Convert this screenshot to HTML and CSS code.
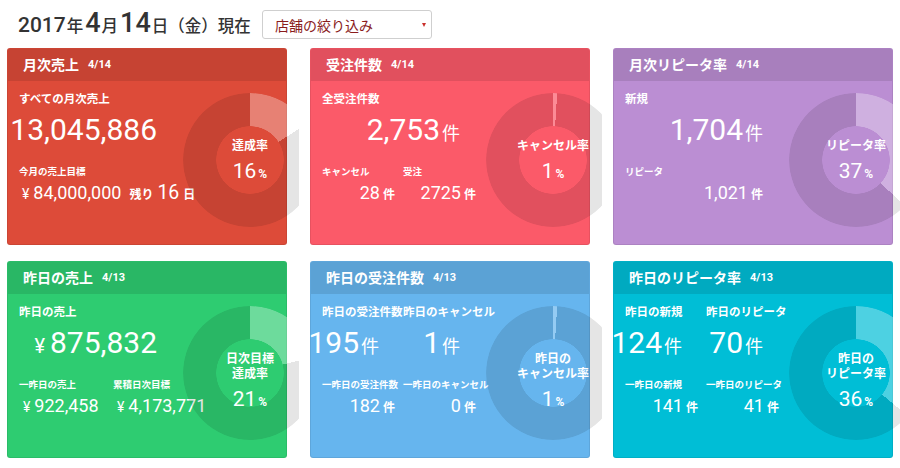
FILE: index.html
```html
<!DOCTYPE html>
<html lang="ja">
<head>
<meta charset="utf-8">
<title>ダッシュボード</title>
<link rel="stylesheet" href="styles.css">
</head>
<body>
<header class="topbar">
  <h1 class="today"><span class="y">2017</span><span class="u">年</span><span class="md">4</span><span class="u">月</span><span class="md">14</span><span class="u">日</span><span class="w">（金）現在</span></h1>
  <div class="select"><span>店舗の絞り込み</span><i class="caret"></i></div>
</header>
<main class="grid">
  <section class="col">
    <div class="card c-red">
      <div class="card-head"><span class="ttl">月次売上</span><span class="dt">4/14</span></div>
      <div class="donut" style="--p:16%"><div class="dl"><div class="t">達成率</div><div class="pc"><span>16</span>%</div></div></div>
      <div class="card-body">
        <div class="lbl">すべての月次売上</div>
        <div class="big"><span class="num">13,045,886</span></div>
        <div class="lbl sm">今月の売上目標</div>
        <div class="mid left"><span class="yen">¥</span><span class="num">84,000,000</span><span class="unit ml8">残り</span><span class="num lg ml4">16</span><span class="unit ml4">日</span></div>
      </div>
    </div>
  </section>
  <section class="col">
    <div class="card c-pink">
      <div class="card-head"><span class="ttl">受注件数</span><span class="dt">4/14</span></div>
      <div class="donut" style="--p:1%"><div class="dl"><div class="t">キャンセル率</div><div class="pc"><span>1</span>%</div></div></div>
      <div class="card-body">
        <div class="lbl">全受注件数</div>
        <div class="big"><span class="num">2,753</span><span class="unit">件</span></div>
        <div class="pair">
          <div class="cell"><div class="lbl sm">キャンセル</div><div class="mid"><span class="num">28</span><span class="unit">件</span></div></div>
          <div class="cell"><div class="lbl sm">受注</div><div class="mid"><span class="num">2725</span><span class="unit">件</span></div></div>
        </div>
      </div>
    </div>
  </section>
  <section class="col">
    <div class="card c-purple">
      <div class="card-head"><span class="ttl">月次リピータ率</span><span class="dt">4/14</span></div>
      <div class="donut" style="--p:37%"><div class="dl"><div class="t">リピータ率</div><div class="pc"><span>37</span>%</div></div></div>
      <div class="card-body">
        <div class="lbl">新規</div>
        <div class="big"><span class="num">1,704</span><span class="unit">件</span></div>
        <div class="lbl sm">リピータ</div>
        <div class="mid"><span class="num">1,021</span><span class="unit">件</span></div>
      </div>
    </div>
  </section>
  <section class="col">
    <div class="card c-green">
      <div class="card-head"><span class="ttl">昨日の売上</span><span class="dt">4/13</span></div>
      <div class="donut" style="--p:21%"><div class="dl"><div class="t">日次目標</div><div class="t">達成率</div><div class="pc"><span>21</span>%</div></div></div>
      <div class="card-body">
        <div class="lbl">昨日の売上</div>
        <div class="big"><span class="yen">¥</span><span class="num">875,832</span></div>
        <div class="pair">
          <div class="cell wide"><div class="lbl sm">一昨日の売上</div><div class="mid left"><span class="yen">¥</span><span class="num">922,458</span></div></div>
          <div class="cell"><div class="lbl sm">累積日次目標</div><div class="mid left"><span class="yen">¥</span><span class="num">4,173,771</span></div></div>
        </div>
      </div>
    </div>
  </section>
  <section class="col">
    <div class="card c-blue">
      <div class="card-head"><span class="ttl">昨日の受注件数</span><span class="dt">4/13</span></div>
      <div class="donut" style="--p:1%"><div class="dl"><div class="t">昨日の</div><div class="t">キャンセル率</div><div class="pc"><span>1</span>%</div></div></div>
      <div class="card-body">
        <div class="pair">
          <div class="cell"><div class="lbl">昨日の受注件数</div><div class="big"><span class="num">195</span><span class="unit">件</span></div></div>
          <div class="cell"><div class="lbl">昨日のキャンセル</div><div class="big"><span class="num">1</span><span class="unit">件</span></div></div>
        </div>
        <div class="pair">
          <div class="cell"><div class="lbl sm">一昨日の受注件数</div><div class="mid"><span class="num">182</span><span class="unit">件</span></div></div>
          <div class="cell"><div class="lbl sm">一昨日のキャンセル</div><div class="mid"><span class="num">0</span><span class="unit">件</span></div></div>
        </div>
      </div>
    </div>
  </section>
  <section class="col">
    <div class="card c-cyan">
      <div class="card-head"><span class="ttl">昨日のリピータ率</span><span class="dt">4/13</span></div>
      <div class="donut" style="--p:36%"><div class="dl"><div class="t">昨日の</div><div class="t">リピータ率</div><div class="pc"><span>36</span>%</div></div></div>
      <div class="card-body">
        <div class="pair">
          <div class="cell"><div class="lbl">昨日の新規</div><div class="big"><span class="num">124</span><span class="unit">件</span></div></div>
          <div class="cell"><div class="lbl">昨日のリピータ</div><div class="big"><span class="num">70</span><span class="unit">件</span></div></div>
        </div>
        <div class="pair">
          <div class="cell"><div class="lbl sm">一昨日の新規</div><div class="mid"><span class="num">141</span><span class="unit">件</span></div></div>
          <div class="cell"><div class="lbl sm">一昨日のリピータ</div><div class="mid"><span class="num">41</span><span class="unit">件</span></div></div>
        </div>
      </div>
    </div>
  </section>
</main>
</body>
</html>
```

FILE: styles.css
```css
* { box-sizing: border-box; }
html, body { margin: 0; padding: 0; overflow: hidden; background: #fff; }
body {
  width: 900px;
  height: 468px;
  font-family: Roboto, "Noto Sans CJK JP", sans-serif;
  color: #fff;
}

/* top bar */
.topbar {
  display: flex;
  align-items: center;
  height: 39px;
  padding: 10px 0 0 18px;
}
.today {
  margin: 0;
  width: 244px;
  display: flex;
  align-items: baseline;
  color: #333;
  font-weight: 500;
  font-size: 17px;
  line-height: 29px;
  white-space: nowrap;
}
.today .y { font-size: 21px; margin-right: 1px; }
.today .md { font-size: 27px; margin: 0 1px 0 2px; }
.today .u { font-size: 16.5px; }
.today .w { font-size: 16.5px; }
.select {
  position: relative;
  width: 170px;
  height: 29px;
  display: flex;
  align-items: center;
  padding-left: 12px;
  border: 1px solid #cfcfcf;
  border-radius: 3px;
  background: #fff;
  color: #8a1c1c;
  font-size: 14px;
}
.caret {
  position: absolute;
  right: 5px;
  top: 12px;
  width: 0;
  height: 0;
  border-left: 2.5px solid transparent;
  border-right: 2.5px solid transparent;
  border-top: 4px solid #c9302c;
}

/* grid */
.grid {
  display: grid;
  grid-template-columns: 303px 303px 298px;
  row-gap: 16px;
  width: 904px;
  margin: 9px 0 0 -4px;
}
.col {
  overflow: hidden;
  padding: 0 12px 0 11px;
}
.card {
  position: relative;
  width: 280px;
  height: 197px;
  border: 1px solid rgba(0, 0, 0, .08);
  border-radius: 3px;
}
.c-red { background: #dd4b39; }
.c-pink { background: #fb5a69; }
.c-purple { background: #bb8ed3; }
.c-green { background: #2ecc71; }
.c-blue { background: #66b5ee; }
.c-cyan { background: #00bed6; }

.card-head {
  height: 32px;
  display: flex;
  align-items: center;
  padding-left: 15px;
  background: rgba(0, 0, 0, .1);
  border-radius: 2px 2px 0 0;
}
.ttl { font-size: 14px; font-weight: 700; line-height: 20px; }
.dt { font-size: 11px; font-weight: 700; margin-left: 9px; line-height: 20px; }

.card-body {
  position: relative;
  z-index: 1;
  height: 163px;
  padding: 10px 0 0 11px;
}
.lbl {
  font-size: 11.5px;
  font-weight: 700;
  line-height: 16px;
  white-space: nowrap;
}
.lbl.sm {
  font-size: 9.5px;
  line-height: 14px;
  margin-top: 17px;
}
.big {
  display: flex;
  justify-content: flex-end;
  align-items: baseline;
  width: 138px;
  height: 36px;
  margin-top: 5px;
  line-height: 36px;
  white-space: nowrap;
}
.big .num { font-size: 30px; }
.big .unit { font-size: 18px; margin-left: 2px; }
.big .yen { font-size: 20px; margin-right: 5px; }

.mid {
  display: flex;
  justify-content: flex-end;
  align-items: baseline;
  width: 138px;
  height: 24px;
  margin-top: 2px;
  line-height: 24px;
  white-space: nowrap;
}
.mid .num { font-size: 18px; }
.mid .num.lg { font-size: 19.5px; }
.mid .unit { font-size: 12px; font-weight: 700; margin-left: 3px; }
.mid .yen { font-size: 14px; margin-right: 4px; }
.mid.left { justify-content: flex-start; width: auto; padding-left: 3px; }
.mid .ml8 { margin-left: 8px; }
.mid .ml4 { margin-left: 4px; }

.pair { display: flex; }
.cell { flex: none; width: 81px; }
.cell.wide { width: 94px; }
.cell .big { width: auto; padding-right: 24px; }
.cell .mid { width: auto; padding-right: 8px; }
.cell .mid.left { padding-right: 0; padding-left: 4px; }

/* donut */
.donut {
  position: absolute;
  left: 175px;
  top: 44px;
  width: 134px;
  height: 134px;
  display: flex;
  justify-content: center;
  z-index: 2;
}
.donut::before {
  content: "";
  position: absolute;
  inset: 0;
  border-radius: 50%;
  background: conic-gradient(rgba(255, 255, 255, .3) 0 var(--p), rgba(0, 0, 0, .1) var(--p) 100%);
  -webkit-mask: radial-gradient(circle, transparent 33.5px, #000 34px);
  mask: radial-gradient(circle, transparent 33.5px, #000 34px);
}
.dl {
  position: relative;
  width: 100px;
  margin-top: 46px;
  text-align: center;
  white-space: nowrap;
}
.dl .t { font-size: 12px; font-weight: 700; line-height: 15px; }
.dl .pc { font-size: 12px; font-weight: 700; line-height: 24px; margin-top: 5px; }
.dl .pc span { font-size: 21px; font-weight: 400; margin-right: 2px; }
```
